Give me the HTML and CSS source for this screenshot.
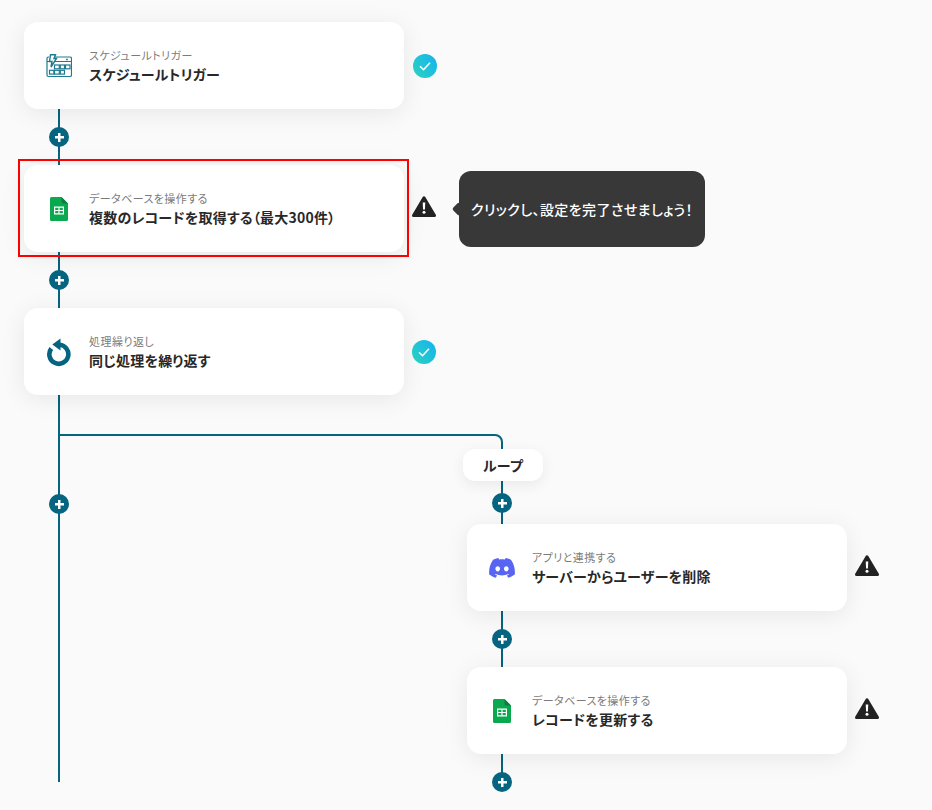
FILE: index.html
```html
<!DOCTYPE html>
<html lang="ja">
<head>
<meta charset="utf-8">
<title>フロー</title>
<link rel="stylesheet" href="styles.css">
</head>
<body>
<main class="canvas">
  <svg class="wires" width="932" height="810" viewBox="0 0 932 810" aria-hidden="true">
    <path class="wire" d="M59 100V782"/>
    <path class="wire" d="M59 435H495a7 7 0 0 1 7 7V782"/>
  </svg>

  <span class="plus p1"></span>
  <span class="plus p2"></span>
  <span class="plus p3"></span>
  <span class="plus p4"></span>
  <span class="plus p5"></span>
  <span class="plus p6"></span>

  <section class="node n1">
    <div class="card">
      <div class="icon">
        <svg width="26" height="24" viewBox="0 0 26 24" fill="none" stroke="#1f7a8f" stroke-width="1.200">
          <path d="M7 3H24a1.500 1.500 0 0 1 1.500 1.500V21a1.500 1.500 0 0 1-1.500 1.500H2.500A1.500 1.500 0 0 1 1 21V4.500A1.500 1.500 0 0 1 2.500 3H3"/>
          <path d="M1 7.500H3M9 7.500H25.500"/>
          <path d="M4.500 .8H9.500L8 4.500H10.500L5 13L6 7.500H3.500Z" fill="#fff" stroke-width="1.400"/>
          <circle cx="21" cy="5.500" r=".9" fill="#1f7a8f" stroke="none"/>
          <rect x="8.500" y="11" width="4.800" height="3.800"/>
          <rect x="14.300" y="11" width="4.200" height="3.800"/>
          <rect x="19.500" y="11" width="4.500" height="3.800"/>
          <rect x="3.500" y="16.300" width="4.400" height="3.800"/>
          <rect x="8.500" y="16.300" width="4.800" height="3.800"/>
          <rect x="14.300" y="16.300" width="4.200" height="3.800"/>
        </svg>
      </div>
      <div class="text">
        <p class="sub">スケジュールトリガー</p>
        <p class="title">スケジュールトリガー</p>
      </div>
    </div>
    <svg class="status check" width="24" height="24" viewBox="0 0 24 24">
      <circle cx="12" cy="12" r="12" fill="url(#okgrad)"/>
      <path d="M7 12.300L10.500 15.700L17 8.800" fill="none" stroke="#fff" stroke-width="1.600"/>
    </svg>
  </section>

  <section class="node n2">
    <div class="card">
      <div class="icon">
        <svg width="18" height="24" viewBox="0 0 18 24">
          <use href="#sheets"/>
        </svg>
      </div>
      <div class="text">
        <p class="sub">データベースを操作する</p>
        <p class="title">複数のレコードを取得する（最大300件）</p>
      </div>
    </div>
    <svg class="status warning" width="24" height="22" viewBox="0 0 24 22"><use href="#warn"/></svg>
    <div class="tip">クリックし、設定を完了させましょう！</div>
  </section>
  <div class="focus"></div>

  <section class="node n3">
    <div class="card">
      <div class="icon">
        <svg width="26" height="30" viewBox="0 0 26 30" fill="none">
          <path d="M13.500 7.800A9.500 9.500 0 1 1 5.300 11.500" stroke="#05647f" stroke-width="4.600"/>
          <path d="M6.300 7.500L14.500 1.500V13.500Z" fill="#05647f"/>
        </svg>
      </div>
      <div class="text">
        <p class="sub">処理繰り返し</p>
        <p class="title">同じ処理を繰り返す</p>
      </div>
    </div>
    <svg class="status" width="24" height="24" viewBox="0 0 24 24">
      <circle cx="12" cy="12" r="12" fill="url(#okgrad)"/>
      <path d="M7 12.300L10.500 15.700L17 8.800" fill="none" stroke="#fff" stroke-width="1.600"/>
    </svg>
  </section>

  <div class="pill">ループ</div>

  <section class="node n4">
    <div class="card">
      <div class="icon">
        <svg width="26" height="20" viewBox="0 2.800 24 18.600">
          <path fill="#5865f2" d="M20.317 4.3698a19.7913 19.7913 0 00-4.8851-1.5152.0741.0741 0 00-.0785.0371c-.211.3753-.4447.8648-.6083 1.2495-1.8447-.2762-3.68-.2762-5.4868 0-.1636-.3933-.4058-.8742-.6177-1.2495a.077.077 0 00-.0785-.037 19.7363 19.7363 0 00-4.8852 1.515.0699.0699 0 00-.0321.0277C.5334 9.0458-.319 13.5799.0992 18.0578a.0824.0824 0 00.0312.0561c2.0528 1.5076 4.0413 2.4228 5.9929 3.0294a.0777.0777 0 00.0842-.0276c.4616-.6304.8731-1.2952 1.226-1.9942a.076.076 0 00-.0416-.1057c-.6528-.2476-1.2743-.5495-1.8722-.8923a.077.077 0 01-.0076-.1277c.1258-.0943.2517-.1923.3718-.2914a.0743.0743 0 01.0776-.0105c3.9278 1.7933 8.18 1.7933 12.0614 0a.0739.0739 0 01.0785.0095c.1202.099.246.1981.3728.2924a.077.077 0 01-.0066.1276 12.2986 12.2986 0 01-1.873.8914.0766.0766 0 00-.0407.1067c.3604.698.7719 1.3628 1.225 1.9932a.076.076 0 00.0842.0286c1.961-.6067 3.9495-1.5219 6.0023-3.0294a.077.077 0 00.0313-.0552c.5004-5.177-.8382-9.6739-3.5485-13.6604a.061.061 0 00-.0312-.0286zM8.02 15.3312c-1.1825 0-2.1569-1.0857-2.1569-2.419 0-1.3332.9555-2.4189 2.157-2.4189 1.2108 0 2.1757 1.0952 2.1568 2.419 0 1.3332-.9555 2.4189-2.1569 2.4189zm7.9748 0c-1.1825 0-2.1569-1.0857-2.1569-2.419 0-1.3332.9554-2.4189 2.1569-2.4189 1.2108 0 2.1757 1.0952 2.1568 2.419 0 1.3332-.946 2.4189-2.1568 2.4189z"/>
        </svg>
      </div>
      <div class="text">
        <p class="sub">アプリと連携する</p>
        <p class="title">サーバーからユーザーを削除</p>
      </div>
    </div>
    <svg class="status warning" width="24" height="22" viewBox="0 0 24 22"><use href="#warn"/></svg>
  </section>

  <section class="node n5">
    <div class="card">
      <div class="icon">
        <svg width="18" height="24" viewBox="0 0 18 24">
          <use href="#sheets"/>
        </svg>
      </div>
      <div class="text">
        <p class="sub">データベースを操作する</p>
        <p class="title">レコードを更新する</p>
      </div>
    </div>
    <svg class="status warning" width="24" height="22" viewBox="0 0 24 22"><use href="#warn"/></svg>
  </section>

  <svg class="defs" width="0" height="0" aria-hidden="true">
    <defs>
      <linearGradient id="okgrad" x1="0" y1="1" x2="1" y2="0.300">
        <stop offset="0" stop-color="#2bd4bd"/>
        <stop offset="1" stop-color="#17b6ea"/>
      </linearGradient>
      <g id="sheets">
        <path fill="#0aa84f" d="M1.500 0H11.500L18 6.500V22.500A1.500 1.500 0 0 1 16.500 24H1.500A1.500 1.500 0 0 1 0 22.500V1.500A1.500 1.500 0 0 1 1.500 0Z"/>
        <path fill="#0b7f43" d="M11.500 0L18 6.500H13A1.500 1.500 0 0 1 11.500 5Z"/>
        <path fill="#fff" fill-rule="evenodd" d="M4 9.500H14V17.500H4ZM5.200 10.700V12.900H8.400V10.700ZM9.600 10.700V12.900H12.800V10.700ZM5.200 14.100V16.300H8.400V14.100ZM9.600 14.100V16.300H12.800V14.100Z"/>
      </g>
      <g id="warn">
        <path fill="#222" stroke="#222" stroke-width="3" stroke-linejoin="round" d="M12 1.800L22.500 19.500H1.500Z"/>
        <path fill="#fff" d="M10.700 6.500H13.300L12.900 13.500H11.100Z"/>
        <circle cx="12" cy="16.300" r="1.500" fill="#fff"/>
      </g>
    </defs>
  </svg>
</main>
</body>
</html>
```
FILE: styles.css
```css
* { box-sizing: border-box; }

html, body {
  margin: 0;
  height: 100%;
  overflow: hidden;
  background: #fafafa;
}

body {
  font-family: "Noto Sans CJK JP", "Noto Sans", sans-serif;
  font-feature-settings: "palt";
  color: #222;
}

.canvas {
  position: relative;
  width: 932px;
  height: 810px;
}

.wires, .defs { position: absolute; left: 0; top: 0; }

.wire {
  fill: none;
  stroke: #05647f;
  stroke-width: 2;
}

.plus {
  position: absolute;
  z-index: 2;
  width: 20px;
  height: 20px;
  border-radius: 50%;
  background:
    linear-gradient(#fff, #fff) center / 9px 2.500px no-repeat,
    linear-gradient(#fff, #fff) center / 2.500px 9px no-repeat,
    #05647f;
}

.p1 { left: 49px; top: 127px; }
.p2 { left: 49px; top: 270px; }
.p3 { left: 49px; top: 494px; }
.p4 { left: 492px; top: 493px; }
.p5 { left: 492px; top: 629px; }
.p6 { left: 492px; top: 772px; }

.node {
  position: absolute;
  z-index: 1;
  display: flex;
  align-items: center;
  gap: 8px;
}

.n1 { left: 24px; top: 22px; }
.n2 { left: 24px; top: 165px; }
.n3 { left: 24px; top: 308px; }
.n4 { left: 467px; top: 524px; }
.n5 { left: 467px; top: 667px; }

.card {
  display: flex;
  align-items: center;
  gap: 12px;
  width: 380px;
  height: 87px;
  padding-left: 17px;
  background: #fff;
  border-radius: 14px;
  box-shadow: 0 4px 24px rgba(0, 0, 0, .08);
}

.icon {
  display: flex;
  justify-content: center;
  align-items: center;
  flex: none;
  width: 36px;
}

.text {
  min-width: 0;
  padding-bottom: 1px;
}

.sub {
  margin: 0;
  font-size: 11px;
  line-height: 16px;
  letter-spacing: .04em;
  color: #7b7b7b;
}

.title {
  margin: 1px 0 0;
  font-size: 14px;
  line-height: 20px;
  letter-spacing: .015em;
  font-weight: 700;
  color: #282828;
}

.status { flex: none; }
.check { margin-left: 1px; }
.warning { margin-top: -3px; }

.tip {
  position: relative;
  display: flex;
  align-items: center;
  justify-content: center;
  width: 246px;
  height: 76px;
  margin: 1px 0 0 15px;
  background: #383838;
  border-radius: 12px;
  font-size: 14px;
  font-weight: 500;
  letter-spacing: .03em;
  color: #fff;
  white-space: nowrap;
}

.tip::before {
  content: "";
  position: absolute;
  left: -5px;
  top: 33px;
  width: 10px;
  height: 10px;
  background: #383838;
  transform: rotate(45deg);
  border-radius: 2px;
}

.focus {
  position: absolute;
  z-index: 3;
  left: 18px;
  top: 159px;
  width: 391px;
  height: 98px;
  border: 2px solid #f00;
  pointer-events: none;
}

.pill {
  position: absolute;
  z-index: 2;
  left: 463px;
  top: 449px;
  display: flex;
  align-items: center;
  justify-content: center;
  width: 80px;
  height: 32px;
  background: #fff;
  border-radius: 12px;
  box-shadow: 0 4px 14px rgba(0, 0, 0, .07);
  font-size: 14px;
  font-weight: 700;
  letter-spacing: .02em;
  color: #282828;
}
```
